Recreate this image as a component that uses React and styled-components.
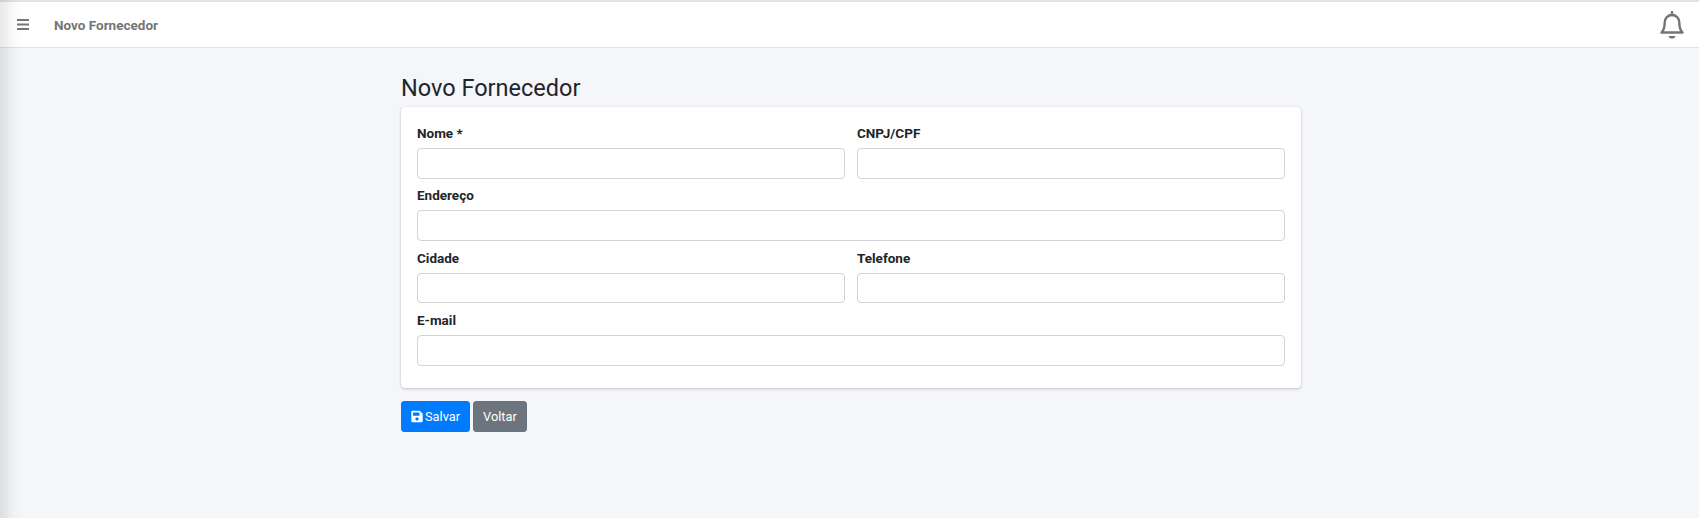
import React from 'react';
import styled, { createGlobalStyle } from 'styled-components';

const GlobalStyle = createGlobalStyle`
  html, body {
    margin: 0;
    padding: 0;
    height: 100%;
    background: #f4f6f9;
  }
  body {
    font-family: Roboto, "Noto Sans", sans-serif;
    color: #212529;
    overflow: hidden;
  }
  * {
    box-sizing: border-box;
  }
`;

const Sidebar = styled.aside`
  position: fixed;
  top: -40px;
  left: -4px;
  width: 4px;
  height: calc(100vh + 80px);
  box-shadow: 0 0 18px rgba(0, 0, 0, 0.5);
  z-index: 10;
`;

const Navbar = styled.nav`
  display: flex;
  align-items: center;
  height: 48px;
  padding: 0 15px 0 17px;
  background: #fff;
  border-top: 2px solid #e3e4e6;
  border-bottom: 1px solid #dee2e6;
`;

const MenuButton = styled.span`
  display: flex;
  width: 37px;
  color: #757575;
`;

const NavTitle = styled.span`
  flex: 1;
  font-size: 13.5px;
  font-weight: 700;
  color: #757575;
`;

const Content = styled.main`
  width: 900px;
  margin-left: 401px;
`;

const PageTitle = styled.h1`
  margin: 0;
  height: 59px;
  padding-top: 22px;
  font-size: 23.5px;
  line-height: 36px;
  font-weight: 400;
  color: #212529;
`;

const Card = styled.section`
  display: grid;
  grid-template-columns: 1fr 1fr;
  column-gap: 12px;
  padding: 16px 16px 15.5px;
  background: #fff;
  border-radius: 4px;
  box-shadow: 0 0 1px rgba(0, 0, 0, 0.125), 0 1px 3px rgba(0, 0, 0, 0.2);
`;

const Field = styled.div`
  grid-column: ${(p) => (p.$wide ? '1 / -1' : 'auto')};
  height: 62.4px;
`;

const Label = styled.label`
  display: block;
  height: 25px;
  font-size: 13.5px;
  line-height: 20px;
  font-weight: 700;
  color: #212529;
`;

const Input = styled.input`
  display: block;
  width: 100%;
  height: 30.5px;
  padding: 4px 8px;
  background: #fff;
  border: 1px solid #ced4da;
  border-radius: 4px;
  font: inherit;
  font-size: 14px;
`;

const Actions = styled.div`
  display: flex;
  gap: 3px;
  margin-top: 13px;
`;

const Button = styled.button`
  display: flex;
  align-items: center;
  gap: 2px;
  height: 31px;
  padding: 0 9px;
  border: 1px solid ${(p) => (p.$primary ? '#007bff' : '#6c757d')};
  border-radius: 3px;
  background: ${(p) => (p.$primary ? '#007bff' : '#6c757d')};
  color: #fff;
  font-family: inherit;
  font-size: 12.8px;
`;

const MenuIcon = () => (
  <svg width="12" height="11" viewBox="0 0 12 11" fill="currentColor">
    <rect x="0" y="0" width="12" height="2" />
    <rect x="0" y="4.500" width="12" height="2" />
    <rect x="0" y="9" width="12" height="2" />
  </svg>
);

const BellIcon = () => (
  <svg width="24" height="28" viewBox="0 0 24 28" fill="none" stroke="#757575" strokeWidth="2.400">
    <path d="M12 1v3" strokeLinecap="round" />
    <path d="M1.500 21.500c2-2 3.200-3.600 3.200-10C4.700 7 8 4 12 4s7.300 3 7.300 7.500c0 6.400 1.200 8 3.200 10z" strokeLinejoin="round" />
    <path d="M8.500 25h7c-.5 2-1.700 2.500-3.500 2.500S9 27 8.500 25z" fill="#757575" stroke="none" />
  </svg>
);

const SaveIcon = () => (
  <svg width="12" height="13" viewBox="0 0 448 512" fill="currentColor">
    <path d="M433.900 129.900l-83.900-83.900A48 48 0 0 0 316.100 32H48C21.500 32 0 53.500 0 80v352c0 26.500 21.500 48 48 48h352c26.500 0 48-21.500 48-48V163.900a48 48 0 0 0-14.100-34zM224 416c-35.300 0-64-28.700-64-64 0-35.300 28.700-64 64-64s64 28.700 64 64c0 35.300-28.700 64-64 64zm96-304.500V212c0 6.600-5.400 12-12 12H76c-6.600 0-12-5.400-12-12V108c0-6.600 5.400-12 12-12h228.500c3.200 0 6.200 1.300 8.500 3.500l3.500 3.500c2.200 2.300 3.500 5.300 3.500 8.500z" />
  </svg>
);

const fields = [
  { id: 'nome', label: 'Nome *' },
  { id: 'documento', label: 'CNPJ/CPF' },
  { id: 'endereco', label: 'Endereço', wide: true },
  { id: 'cidade', label: 'Cidade' },
  { id: 'telefone', label: 'Telefone' },
  { id: 'email', label: 'E-mail', wide: true },
];

export default function App() {
  return (
    <>
      <GlobalStyle />
      <Sidebar />
      <Navbar>
        <MenuButton>
          <MenuIcon />
        </MenuButton>
        <NavTitle>Novo Fornecedor</NavTitle>
        <BellIcon />
      </Navbar>
      <Content>
        <PageTitle>Novo Fornecedor</PageTitle>
        <Card>
          {fields.map((field) => (
            <Field key={field.id} $wide={field.wide}>
              <Label htmlFor={field.id}>{field.label}</Label>
              <Input id={field.id} type="text" />
            </Field>
          ))}
        </Card>
        <Actions>
          <Button $primary>
            <SaveIcon />
            Salvar
          </Button>
          <Button>Voltar</Button>
        </Actions>
      </Content>
    </>
  );
}
